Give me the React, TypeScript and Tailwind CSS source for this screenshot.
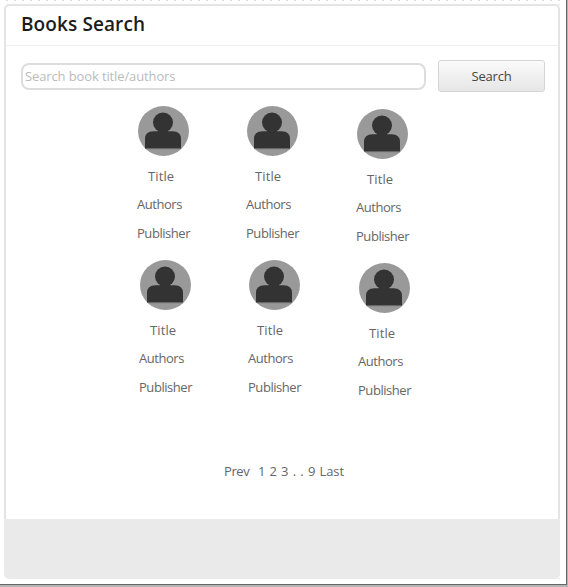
type BookProps = { titleClass: string; className?: string };

function Avatar() {
  return (
    <svg width="52" height="50" viewBox="0 0 52 50" className="block shrink-0">
      <ellipse cx="25.5" cy="25" rx="25.5" ry="25" fill="#999999" />
      <circle cx="25" cy="16.5" r="10" fill="#333333" />
      <path d="M7 42.5V33Q7 25.2 15.5 25.2H19.5Q22 25 22 23H28Q28 25 30.5 25.2H34.5Q43 25.2 43 33V42.5Z" fill="#333333" />
      <path d="M8 42.7H43" stroke="#686868" strokeWidth="0.7" />
    </svg>
  );
}

function Book({ titleClass, className = "" }: BookProps) {
  return (
    <div className={`flex w-[60px] shrink-0 flex-col whitespace-nowrap ${className}`}>
      <Avatar />
      <span className={`mt-[10px] h-5 leading-5 tracking-[0.1px] ${titleClass}`}>Title</span>
      <span className="-ml-px mt-2 h-5 leading-5 tracking-[-0.45px]">Authors</span>
      <span className="-ml-px mt-[9px] h-5 leading-5 tracking-[-0.45px]">Publisher</span>
    </div>
  );
}

function BookRow({ className }: { className: string }) {
  return (
    <div className={`flex items-start ${className}`}>
      <Book titleClass="ml-[10px]" />
      <Book titleClass="ml-2" className="ml-[49px]" />
      <Book titleClass="ml-[10px]" className="ml-[50px] mt-[3px]" />
    </div>
  );
}

export default function App() {
  return (
    <div className="h-[587px] w-[568px] overflow-hidden bg-[#b5b5b5] pr-px pb-[2px] font-['Open_Sans','Noto_Sans',sans-serif] text-[13px] text-[#666666]">
      <div className="h-[585px] w-[567px] border-r border-b border-[#666666] bg-white">
        <div className="h-[579px] w-[561px] bg-[radial-gradient(circle_at_7px_0px,#dddddd_0.8px,transparent_1.2px)] bg-[length:8px_8px] pr-px pt-1">
          <div className="h-[575px] w-[560px] bg-white bg-[radial-gradient(circle_at_7.5px_4px,#cccccc_1px,transparent_1.5px)] bg-[length:8px_8px] bg-right bg-repeat-y pl-1">
            <div className="flex h-[575px] w-[556px] flex-col overflow-hidden rounded-[5px] bg-[#eaeaea]">
              <main className="flex h-[515px] w-[556px] shrink-0 flex-col rounded-t-[5px] border-x-2 border-t-2 border-[#e4e4e4] bg-white">
                <header className="flex h-[40px] shrink-0 items-center border-b border-[#eeeeee] pb-[4px] pl-[15px]">
                  <h1 className="whitespace-nowrap text-[19px] font-semibold leading-6 tracking-[0.1px] text-[#1c1c1c]">Books Search</h1>
                </header>
                <div className="mt-[14px] flex h-8 shrink-0 pl-[15px]">
                  <input
                    aria-label="Search books"
                    placeholder="Search book title/authors"
                    className="mt-[3px] h-[27px] w-[405px] rounded-[8px] border-2 border-[#dddddd] px-[2px] pb-px text-[13px] tracking-[-0.12px] outline-none placeholder:text-[#bbbbbb]"
                  />
                  <button className="ml-3 h-8 w-[107px] rounded-[3px] border border-[#d5d5d5] bg-linear-to-b from-[#fafafa] to-[#e6e6e6] pt-px text-[13px] tracking-[-0.2px] text-[#444444]">
                    Search
                  </button>
                </div>
                <BookRow className="mt-[14px] h-[154px] shrink-0 pl-[132px]" />
                <BookRow className="h-[154px] shrink-0 pl-[134px]" />
                <nav className="mt-[47px] whitespace-pre pl-[218px] leading-5 tracking-[-0.1px] [word-spacing:1px]"><span className="tracking-[-0.4px]">Prev</span>{"  1 2 3 . . 9 Last"}</nav>
              </main>
            </div>
          </div>
        </div>
      </div>
    </div>
  );
}
